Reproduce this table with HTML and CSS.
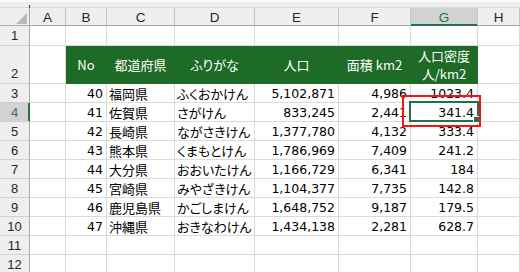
FILE: index.html
```html
<!DOCTYPE html>
<html lang="ja">
<head>
<meta charset="utf-8">
<title>Sheet</title>
<link rel="stylesheet" href="styles.css">
</head>
<body>
<div class="top"></div>
<div class="sheet">
  <div class="ch corner"></div><div class="ch">A</div><div class="ch">B</div><div class="ch">C</div><div class="ch">D</div><div class="ch">E</div><div class="ch">F</div><div class="ch sel">G</div><div class="ch">H</div>

  <div class="rh">1</div><div></div><div></div><div></div><div></div><div></div><div></div><div></div><div></div>

  <div class="rh rh2">2</div><div></div><div class="hd">No</div><div class="hd">都道府県</div><div class="hd">ふりがな</div><div class="hd">人口</div><div class="hd">面積 km2</div><div class="hd hd2"><span>人口密度</span><span>人/km2</span></div><div></div>

  <div class="rh">3</div><div></div><div class="n">40</div><div class="t">福岡県</div><div class="t">ふくおかけん</div><div class="n">5,102,871</div><div class="n">4,986</div><div class="n">1023.4</div><div></div>
  <div class="rh sel">4</div><div></div><div class="n">41</div><div class="t">佐賀県</div><div class="t">さがけん</div><div class="n">833,245</div><div class="n">2,441</div><div class="n active">341.4<span class="cursor"></span><span class="handle"></span><span class="mark"></span></div><div></div>
  <div class="rh">5</div><div></div><div class="n">42</div><div class="t">長崎県</div><div class="t">ながさきけん</div><div class="n">1,377,780</div><div class="n">4,132</div><div class="n">333.4</div><div></div>
  <div class="rh">6</div><div></div><div class="n">43</div><div class="t">熊本県</div><div class="t">くまもとけん</div><div class="n">1,786,969</div><div class="n">7,409</div><div class="n">241.2</div><div></div>
  <div class="rh">7</div><div></div><div class="n">44</div><div class="t">大分県</div><div class="t">おおいたけん</div><div class="n">1,166,729</div><div class="n">6,341</div><div class="n">184</div><div></div>
  <div class="rh">8</div><div></div><div class="n">45</div><div class="t">宮崎県</div><div class="t">みやざきけん</div><div class="n">1,104,377</div><div class="n">7,735</div><div class="n">142.8</div><div></div>
  <div class="rh">9</div><div></div><div class="n">46</div><div class="t">鹿児島県</div><div class="t">かごしまけん</div><div class="n">1,648,752</div><div class="n">9,187</div><div class="n">179.5</div><div></div>
  <div class="rh">10</div><div></div><div class="n">47</div><div class="t">沖縄県</div><div class="t">おきなわけん</div><div class="n">1,434,138</div><div class="n">2,281</div><div class="n">628.7</div><div></div>
  <div class="rh">11</div><div></div><div></div><div></div><div></div><div></div><div></div><div></div><div></div>
  <div class="rh">12</div><div></div><div></div><div></div><div></div><div></div><div></div><div></div><div></div>
</div>
</body>
</html>
```

FILE: styles.css
```css
html, body {
  margin: 0;
  padding: 0;
  background: #ffffff;
}
body {
  width: 520px;
  height: 272px;
  overflow: hidden;
}
.top {
  position: relative;
  height: 8px;
  box-sizing: border-box;
  background: #ededed;
  border-top: 2px solid #fafafa;
  border-bottom: 1px solid #d6d6d6;
}
.top::after {
  content: "";
  position: absolute;
  left: 29px;
  bottom: -1px;
  width: 1px;
  height: 3px;
  background: #3a3a3a;
}
.sheet {
  display: grid;
  grid-template-columns: 30px 36px 41px 68px 80px 84px 72px 67px 1fr;
  grid-template-rows: 18px 20px 38px;
  grid-auto-rows: 19px;
  font-family: "DejaVu Sans", "Noto Sans CJK JP", sans-serif;
  font-size: 12.5px;
  color: #000000;
}
.sheet > div {
  box-sizing: border-box;
  border-right: 1px solid #dadada;
  border-bottom: 1px solid #dadada;
  display: flex;
  align-items: center;
  white-space: nowrap;
  min-width: 0;
}
.sheet > .ch {
  background: #efefef;
  border-right-color: #c4c4c4;
  border-bottom-color: #a9a9a9;
  justify-content: center;
  font-family: "Liberation Sans", Arial, sans-serif;
  font-size: 13.5px;
  color: #262626;
  padding-top: 1px;
}
.sheet > .ch.sel {
  background: #d2d2d2;
  border-bottom-color: #217346;
  box-shadow: inset 0 -1px 0 #217346;
  color: #217346;
}
.sheet > .corner {
  position: relative;
  border-right-color: #a9a9a9;
}
.corner::after {
  content: "";
  position: absolute;
  right: 2px;
  bottom: 1px;
  width: 11px;
  height: 11px;
  background: #b9b9b9;
  clip-path: polygon(100% 0, 100% 100%, 0 100%);
}
.sheet > .rh {
  background: #efefef;
  border-right-color: #a9a9a9;
  border-bottom-color: #d0d0d0;
  justify-content: center;
  font-family: "Liberation Sans", Arial, sans-serif;
  font-size: 13px;
  color: #262626;
}
.sheet > .rh2 {
  align-items: flex-end;
  padding-bottom: 2px;
}
.sheet > .rh.sel {
  background: #d2d2d2;
  border-right-color: #217346;
  box-shadow: inset -1px 0 0 #217346;
  color: #3a6e52;
}
.sheet > .hd {
  background: #1d6b26;
  border-color: #1d6b26;
  color: #ffffff;
  justify-content: center;
  font-family: "Noto Sans CJK JP", sans-serif;
  font-size: 13px;
  font-feature-settings: "palt";
}
.sheet > .hd2 {
  flex-direction: column;
  line-height: 18px;
  padding-top: 1px;
}
.sheet > .n {
  justify-content: flex-end;
  padding-right: 3px;
}
.sheet > .t {
  padding-left: 2px;
  font-family: "Noto Sans CJK JP", sans-serif;
  font-size: 13px;
  font-feature-settings: "palt";
}
.sheet > .active {
  position: relative;
}
.cursor {
  position: absolute;
  left: -2px;
  top: -2px;
  right: -2px;
  bottom: -1px;
  border: 2px solid #217346;
}
.handle {
  position: absolute;
  right: -3px;
  bottom: -2px;
  width: 5px;
  height: 5px;
  background: #217346;
  border: 1px solid #ffffff;
}
.mark {
  position: absolute;
  left: -9px;
  top: -8px;
  right: -4px;
  bottom: -6px;
  border: 2px solid #ff1010;
}
```
